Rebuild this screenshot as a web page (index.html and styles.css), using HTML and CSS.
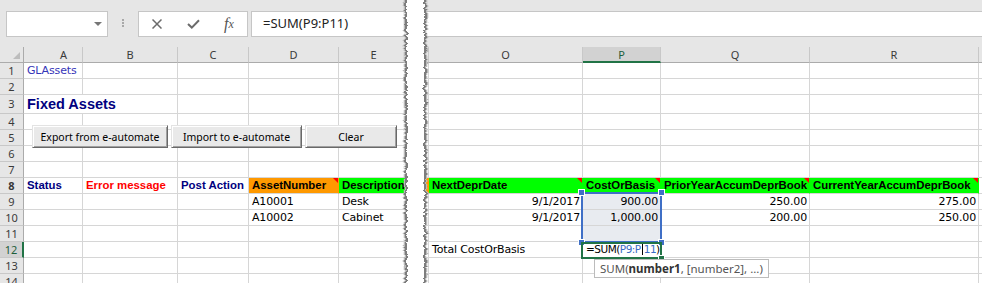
FILE: index.html
```html
<!DOCTYPE html>
<html lang="en">
<head>
<meta charset="UTF-8">
<title>GLAssets</title>
<link rel="stylesheet" href="styles.css">
</head>
<body>
    <div class="fbar">
        <div class="namebox"><span class="dd"></span></div>
        <div class="grip"><i></i><i></i><i></i></div>
        <div class="fxbox">
            <span class="ico"><svg width="10" height="10" viewBox="0 0 10 10"><path d="M0.5 0.5L9.5 9.5M9.5 0.5L0.5 9.5" stroke="#6b6b6b" stroke-width="1.5" fill="none"/></svg></span>
            <span class="ico"><svg width="13" height="10" viewBox="0 0 13 10"><path d="M1 5L4.8 8.6L12 1.2" stroke="#6b6b6b" stroke-width="2" fill="none"/></svg></span>
            <span class="ico fx">f<small>x</small></span>
        </div>
        <div class="finput">=SUM(P9:P11)</div>
    </div>

    <div class="sheet">
        <div class="row hdr">
            <div class="corner"><span></span></div><div class="ca">A</div><div>B</div><div>C</div><div>D</div><div>E</div><div></div><div>O</div><div class="on">P</div><div>Q</div><div>R</div><div></div>
        </div>
        <div class="row">
            <div class="rh">1</div><div class="gl">GLAssets</div><div></div><div></div><div></div><div></div><div></div><div></div><div></div><div></div><div></div><div></div>
        </div>
        <div class="row">
            <div class="rh">2</div><div></div><div></div><div></div><div></div><div></div><div></div><div></div><div></div><div></div><div></div><div></div>
        </div>
        <div class="row tall">
            <div class="rh">3</div><div class="title">Fixed Assets</div><div></div><div></div><div></div><div></div><div></div><div></div><div></div><div></div><div></div>
        </div>
        <div class="row">
            <div class="rh">4</div><div></div><div></div><div></div><div></div><div></div><div></div><div></div><div></div><div></div><div></div><div></div>
        </div>
        <div class="row">
            <div class="rh">5</div><div></div><div></div><div></div><div></div><div></div><div></div><div></div><div></div><div></div><div></div><div></div>
        </div>
        <div class="row">
            <div class="rh">6</div><div></div><div></div><div></div><div></div><div></div><div></div><div></div><div></div><div></div><div></div><div></div>
        </div>
        <div class="row">
            <div class="rh">7</div><div></div><div></div><div></div><div></div><div></div><div></div><div></div><div></div><div></div><div></div><div></div>
        </div>
        <div class="row heads">
            <div class="rh">8</div>
            <div class="navy">Status</div>
            <div class="red">Error message</div>
            <div class="navy">Post Action</div>
            <div class="orange cm">AssetNumber</div>
            <div class="green">Description</div>
            <div class="orange"></div>
            <div class="green cm">NextDeprDate</div>
            <div class="green cm">CostOrBasis</div>
            <div class="green cm">PriorYearAccumDeprBook</div>
            <div class="green cm">CurrentYearAccumDeprBook</div>
            <div></div>
        </div>
        <div class="row">
            <div class="rh">9</div><div></div><div></div><div></div><div>A10001</div><div>Desk</div><div></div>
            <div class="num">9/1/2017</div><div class="num sel">900.00</div><div class="num">250.00</div><div class="num">275.00</div><div></div>
        </div>
        <div class="row">
            <div class="rh">10</div><div></div><div></div><div></div><div>A10002</div><div>Cabinet</div><div></div>
            <div class="num">9/1/2017</div><div class="num sel">1,000.00</div><div class="num">200.00</div><div class="num">250.00</div><div></div>
        </div>
        <div class="row">
            <div class="rh">11</div><div></div><div></div><div></div><div></div><div></div><div></div><div></div><div class="sel"></div><div></div><div></div><div></div>
        </div>
        <div class="row">
            <div class="rh on">12</div><div></div><div></div><div></div><div></div><div></div><div></div>
            <div>Total CostOrBasis</div>
            <div class="edit">=SUM(<span class="ref">P9:P</span><span class="caret"></span><span class="ref">11</span>)</div>
            <div></div><div></div><div></div>
        </div>
        <div class="row">
            <div class="rh">13</div><div></div><div></div><div></div><div></div><div></div><div></div><div></div><div></div><div></div><div></div><div></div>
        </div>
        <div class="row">
            <div class="rh">14</div><div></div><div></div><div></div><div></div><div></div><div></div><div></div><div></div><div></div><div></div><div></div>
        </div>

        <!-- form buttons float over the cells -->
        <div class="btns">
            <button class="b-export">Export from e-automate</button>
            <button class="b-import">Import to e-automate</button>
            <button class="b-clear">Clear</button>
        </div>

        <!-- formula range + active cell -->
        <div class="range">
            <i class="h tl"></i><i class="h tr"></i><i class="h bl"></i><i class="h br"></i>
        </div>
        <div class="active"><i class="gh"></i></div>
        <div class="tip">SUM(<b>number1</b>, [number2], ...)</div>
    </div>

    <svg class="tear" width="30" height="283" viewBox="0 0 30 283">
        <defs>
            <filter id="rough" x="-40%" y="-5%" width="180%" height="110%">
                <feTurbulence type="fractalNoise" baseFrequency="0.05 0.4" numOctaves="3" seed="7" result="n"/>
                <feDisplacementMap in="SourceGraphic" in2="n" scale="5" xChannelSelector="R" yChannelSelector="G"/>
            </filter>
        </defs>
        <g filter="url(#rough)">
            <rect x="5" y="-10" width="19" height="303" fill="#fff" stroke="#b9b9b9" stroke-width="4.5"/>
            <rect x="5" y="-10" width="19" height="303" fill="#fff" stroke="#7d7d7d" stroke-width="2"/>
            <rect x="6.5" y="-10" width="16" height="303" fill="#fff"/>
        </g>
    </svg>
</body>
</html>
```
FILE: styles.css
```css
body {
    margin: 0;
    width: 982px;
    height: 283px;
    overflow: hidden;
    position: relative;
    background-color: #fff;
    font-family: "DejaVu Sans", sans-serif;
}

/* formula bar */
.fbar {
    display: flex;
    height: 47px;
    padding-top: 11px;
    box-sizing: border-box;
    background-color: #e6e6e6;
}

.namebox {
    position: relative;
    margin-left: 6px;
    width: 102px;
    height: 26px;
    box-sizing: border-box;
    border: 1px solid #c6c6c6;
    background-color: #fff;
}

.namebox .dd {
    position: absolute;
    right: 5px;
    top: 10px;
    border-left: 4px solid transparent;
    border-right: 4px solid transparent;
    border-top: 4px solid #767676;
}

.grip {
    width: 30px;
    display: flex;
    flex-direction: column;
    align-items: center;
    gap: 1px;
    padding-top: 8px;
}

.grip i {
    width: 2px;
    height: 2px;
    background-color: #a8a8a8;
}

.fxbox {
    display: flex;
    align-items: center;
    width: 110px;
    height: 26px;
    box-sizing: border-box;
    border: 1px solid #c6c6c6;
    background-color: #fff;
}

.ico {
    width: 36px;
    display: flex;
    justify-content: center;
    align-items: center;
}

.fx {
    font-family: "Liberation Serif", serif;
    font-style: italic;
    font-size: 16px;
    color: #555;
}

.fx small {
    font-size: 12px;
}

.finput {
    flex: 1;
    margin-left: 3px;
    height: 26px;
    box-sizing: border-box;
    border: 1px solid #c6c6c6;
    border-right: none;
    background-color: #fff;
    padding-left: 11px;
    font-family: "Noto Sans", sans-serif;
    font-size: 13px;
    line-height: 23px;
    color: #222;
}

/* grid */
.sheet {
    position: relative;
}

.row {
    display: grid;
    grid-template-columns: 24px 59px 95px 71px 90px 70px 20px 154px 78px 149px 169px 3px;
    height: 16px;
}

.row > div {
    position: relative;
    box-sizing: border-box;
    border-right: 1px solid #d6d6d6;
    border-bottom: 1px solid #d6d6d6;
    padding: 0 3px;
    font-size: 11px;
    line-height: 15px;
    letter-spacing: -0.15px;
    white-space: nowrap;
    overflow: hidden;
    color: #000;
}

.row.tall {
    height: 19px;
}

.row.tall > div {
    line-height: 18px;
}

.row > .rh {
    padding: 0;
    background-color: #e6e6e6;
    border-right-color: #ababab;
    border-bottom-color: #c8c8c8;
    text-align: center;
    font-family: "Noto Sans", sans-serif;
    font-size: 11px;
    letter-spacing: 0;
    color: #3a3a3a;
}

.row > .rh.on {
    background-color: #d2d2d2;
    border-right: 2px solid #217346;
    color: #1d5e3a;
}

.hdr > div {
    background-color: #e6e6e6;
    text-align: center;
    font-family: "Noto Sans", sans-serif;
    color: #3a3a3a;
}

.row.hdr > div {
    border-right-color: #c8c8c8;
    border-bottom-color: #ababab;
    letter-spacing: 0;
    line-height: 16px;
}

.row.hdr > .ca {
    padding-left: 24px;
}

.row.hdr > .on {
    background-color: #d2d2d2;
    border-bottom: 2px solid #217346;
    color: #1d5e3a;
}

.row.hdr > .corner {
    display: flex;
    justify-content: flex-end;
    align-items: flex-end;
    padding: 0 3px 3px 0;
    border-right-color: #ababab;
}

.corner span {
    border-left: 7px solid transparent;
    border-bottom: 7px solid #bdbdbd;
}

.row > .gl {
    color: #3535b8;
    overflow: visible;
}

.row > .title {
    grid-column: span 2;
    padding-left: 3px;
    font-family: "Liberation Sans", sans-serif;
    font-weight: bold;
    font-size: 14.5px;
    letter-spacing: 0;
    color: #000080;
}

.heads > div {
    font-family: "Liberation Sans", sans-serif;
    font-weight: bold;
    font-size: 11.4px;
    letter-spacing: 0;
}

.row > .navy {
    color: #000080;
}

.row > .red {
    color: #ff0000;
}

.row > .orange {
    background-color: #ff9900;
    border-right-color: #ff9900;
}

.row > .green {
    background-color: #00ff00;
    border-right-color: #00ff00;
}

.cm::after {
    content: "";
    position: absolute;
    top: 0;
    right: 0;
    border-left: 5px solid transparent;
    border-top: 5px solid #ff0000;
}

.row > .num {
    text-align: right;
    padding-right: 2px;
}

.row > .sel {
    background-color: #e8ebf0;
}

.row > .edit {
    font-size: 10.5px;
    letter-spacing: -0.5px;
    padding-left: 3px;
}

.ref {
    color: #3a6cc4;
}

.caret {
    display: inline-block;
    width: 1px;
    height: 13px;
    margin: 0 1px;
    vertical-align: -2px;
    background-color: #000;
}

/* buttons */
.btns {
    position: absolute;
    left: 32px;
    top: 78px;
    display: flex;
    gap: 3px;
}

.btns button {
    height: 23px;
    padding: 0;
    background-color: #e9e9e9;
    border: 1px solid;
    border-color: #e3e3e3 #696969 #696969 #e3e3e3;
    box-shadow: inset 1px 1px #fff, inset -1px -1px #a0a0a0;
    font-family: "Noto Sans", sans-serif;
    font-size: 10.5px;
    color: #000;
}

.b-export {
    width: 136px;
}

.b-import {
    width: 131px;
}

.b-clear {
    width: 92px;
}

/* selection */
.range {
    position: absolute;
    left: 581px;
    top: 145px;
    width: 81px;
    height: 51px;
    box-sizing: border-box;
    border: 2px solid #3f6fc6;
}

.h {
    position: absolute;
    width: 5px;
    height: 5px;
    background-color: #3f6fc6;
    outline: 1px solid #fff;
}

.h.tl { left: -4px; top: -4px; }
.h.tr { right: -4px; top: -4px; }
.h.bl { left: -4px; bottom: -4px; }
.h.br { right: -4px; bottom: -4px; }

.active {
    position: absolute;
    left: 581px;
    top: 195px;
    width: 81px;
    height: 17px;
    box-sizing: border-box;
    border: 2px solid #217346;
}

.gh {
    position: absolute;
    right: -4px;
    bottom: -4px;
    width: 5px;
    height: 5px;
    background-color: #217346;
    outline: 1px solid #fff;
}

.tip {
    position: absolute;
    left: 594px;
    top: 212px;
    height: 19px;
    box-sizing: border-box;
    padding: 0 5px;
    border: 1px solid #bcbcbc;
    background-color: #fff;
    font-family: "Noto Sans", sans-serif;
    font-size: 11.5px;
    line-height: 17px;
    color: #555;
    white-space: nowrap;
}

.tip b {
    color: #333;
}

/* torn edge between the two parts of the sheet */
.tear {
    position: absolute;
    left: 401px;
    top: 0;
}
```
